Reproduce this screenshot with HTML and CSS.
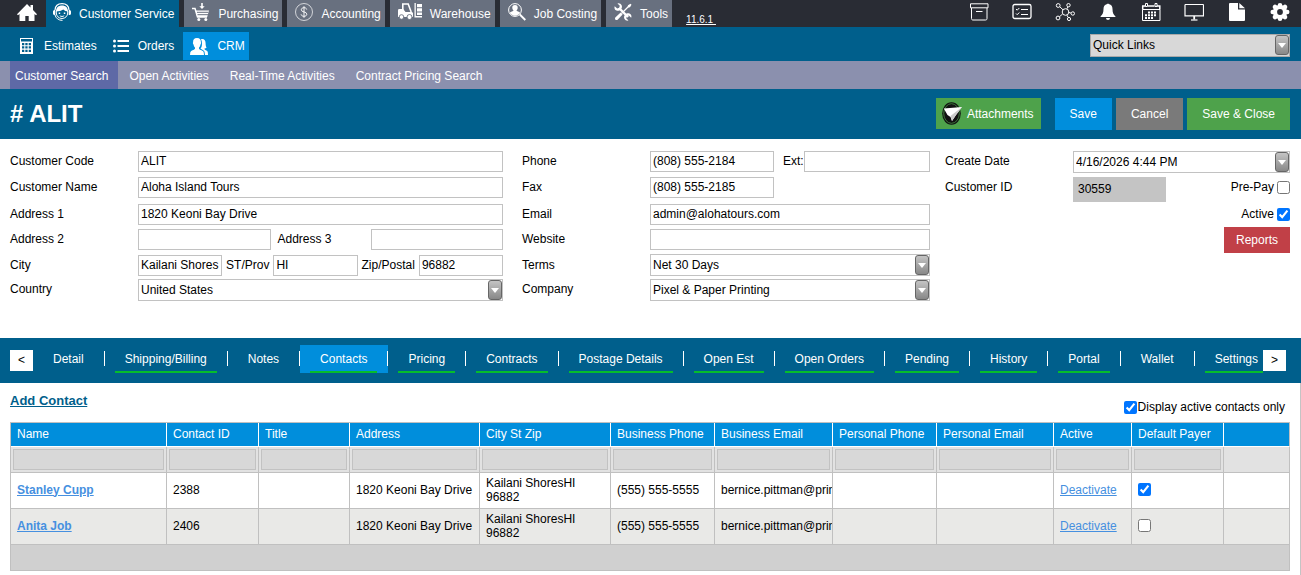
FILE: index.html
```html
<!DOCTYPE html>
<html lang="en">
<head>
  <meta charset="UTF-8" />
  <meta name="viewport" content="width=device-width, initial-scale=1" />
  <title>Customer - ALIT</title>
  <link rel="stylesheet" href="styles.css">
</head>
<body>
  <header class="topbar">
    <nav class="modules" aria-label="Modules">
      <a href="#" class="home" aria-label="Home">
        <svg width="20" height="18" viewBox="0 0 20 18"><path fill="#fff" d="M10 0 13.500 3.500V1H16v5L20 10.200l-1 1-1.500-1.200V17h-5.800v-5H8.300v5H2.500v-7L1 11.200l-1-1z"/></svg>
      </a>
      <a href="#" class="module active">
        <svg width="18" height="18" viewBox="0 0 18 18" fill="none" stroke="#fff"><path stroke-width="1.200" d="M2 7C2.300 3 5 .7 9 .7S15.700 3 16 7"/><path stroke-width="1" d="M3.300 8v2c0 3 2.500 5.500 5.700 5.500s5.700-2.500 5.700-5.500V8"/><path fill="#fff" stroke="none" d="M3 8.500c0-4 2.500-6 6-6s6 2 6 6c-1.800 0-3.500-.7-4.700-2C8.500 7.800 6 8.500 3 8.500zM0 8.500C0 7.500.8 7 2.300 7v5C.8 12 0 11.500 0 10.500zM18 8.500c0-1-.8-1.500-2.300-1.500v5c1.500 0 2.300-.5 2.300-1.500zM5.700 9.500h1.500V11H5.700zM10.800 9.500h1.500V11h-1.500z"/><path d="M6.800 12.700c1 1 3.400 1 4.400 0M2 12c.8 3.200 3.500 5.400 7.500 5.400"/></svg>
        Customer Service
      </a>
      <a href="#" class="module">
        <svg width="18" height="18" viewBox="0 0 18 18" fill="none" stroke="#fff"><path stroke-width="1.500" d="M0 5.500h3L5.500 14H15"/><path fill="#fff" stroke="none" d="M3.500 7.500h13.500l-1.800 6.500H5.200zM10 6 7.300 3.200h1.900V0h1.600v3.200h1.900z"/><path stroke="#68707f" stroke-width="1" d="M5 9.300h11.500M5.500 11.700h10.500"/><circle cx="6.800" cy="16.400" r="1.500" fill="#fff" stroke="none"/><circle cx="13.800" cy="16.400" r="1.500" fill="#fff" stroke="none"/></svg>
        Purchasing
      </a>
      <a href="#" class="module">
        <svg width="18" height="18" viewBox="0 0 18 18" fill="none" stroke="#fff"><circle cx="9" cy="9" r="8.500" stroke-width=".7"/><path stroke-width=".9" d="M11.700 6.500C11.500 5.200 10.500 4.700 9 4.700S6.300 5.400 6.300 6.800c0 3 5.500 1.300 5.500 4.400 0 1.400-1.200 2.100-2.800 2.100s-2.700-.6-2.900-2M9 3.200v11.600"/></svg>
        Accounting
      </a>
      <a href="#" class="module">
        <svg width="24" height="17" viewBox="0 0 24 17" fill="none" stroke="#fff"><path stroke-width="1.600" d="M4.800 8V1h5.400l3 8"/><path fill="#fff" stroke="none" d="M.5 6h4.700l2.300 3h6.500l1 1v4H0V7.500zM16.500 0h1.300v13H24v1.500h-7.500zM19 1h5v3.300h-5zM19 5.200h5v3.300h-5zM19 9.400h5v2.600h-5z"/><circle cx="3.500" cy="14" r="2.300" fill="#fff" stroke="#68707f" stroke-width=".9"/><circle cx="11.500" cy="14" r="2.500" fill="#fff" stroke="#68707f" stroke-width=".9"/></svg>
        Warehouse
      </a>
      <a href="#" class="module">
        <svg width="18" height="18" viewBox="0 0 18 18" fill="none" stroke="#fff"><circle cx="7" cy="7" r="6.400" stroke-width="1"/><path fill="#fff" stroke="none" d="M7 2c2 0 2.900 1.300 2.700 3-.1 1.200-.6 1.900-1.200 2.400 0 .8 3 1 3.700 2.400-1 1.700-3 2.900-5.200 2.900S2.800 11.500 1.800 9.800C2.500 8.400 5.500 8.200 5.500 7.400 4.900 6.900 4.400 6.200 4.300 5 4.100 3.300 5 2 7 2z"/><path stroke-width="1.900" d="m11.800 11.500 5.500 5.500"/></svg>
        Job Costing
      </a>
      <a href="#" class="module">
        <svg width="18" height="18" viewBox="0 0 18 18" fill="none" stroke="#fff"><path stroke-width="2.400" d="M5 5l9 9"/><path fill="#fff" stroke="none" d="M3.500.5 5.800 2.800 5.300 4.800 3.200 5.500.7 3.200C0 5 .8 7 2.500 7.600c1.200.4 2 .2 3 0l2.200-2.300c.3-1 .4-1.800-.1-3C7 .8 5 0 3.500.5zM14.500 17.500l-2.300-2.300.5-2 2-.7 2.500 2.300c.7-1.800 0-3.800-1.700-4.400-1.200-.4-2-.2-3 0l-2.200 2.300c-.3 1-.4 1.800.1 3 .7 1.500 2.600 2.300 4.100 1.800z"/><path stroke-width="1.300" d="M7.500 10.500 14.500 3.500"/><path fill="#fff" stroke="none" d="m14 2.300 2.500-1.500 1 1-1.500 2.500-1.500.3-.8-.8zM6.600 9.400l2 2-5 5.300c-1.600 1-3.300-.6-2.300-2.300z"/></svg>
        Tools
      </a>
      <a href="#" class="version">11.6.1&nbsp;</a>
    </nav>
    <div class="shortcuts">
      <a href="#" aria-label="Archive"><svg width="20" height="18" viewBox="0 0 20 18" fill="none" stroke="#fff"><path d="M1.500.8h17.500v4H1.500z"/><path d="M2.500 5v10.500c0 1 .5 1.500 1.500 1.500h12.500c1 0 1.500-.5 1.500-1.500V5M7 8.500h6.500"/></svg></a>
      <a href="#" aria-label="Tasks"><svg width="20" height="18" viewBox="0 0 20 18" fill="none" stroke="#fff"><rect x="1" y="1.500" width="18" height="14" rx="1.800" stroke-width="1.300"/><path d="m4 6 1.200 1.200L7.300 5M4 10.500l1.200 1.200L7.300 9.500M9 6.500h7M9 11.500h7"/></svg></a>
      <a href="#" aria-label="Network"><svg width="20" height="18" viewBox="0 0 20 18" fill="none" stroke="#fff"><circle cx="10.500" cy="9" r="3.300"/><circle cx="3.200" cy="2.500" r="1.900"/><circle cx="13.500" cy="2.200" r="1.700"/><circle cx="17.800" cy="10.500" r="1.700"/><circle cx="3" cy="15" r="1.900"/><circle cx="14" cy="16" r="1.600"/><path d="m4.800 3.800 3.200 3M13 3.700l-1 2M14 9.500l2 .6M4.500 13.700l3-2.600M12 12.200l1 2"/></svg></a>
      <a href="#" aria-label="Notifications"><svg width="20" height="18" viewBox="0 0 20 18" fill="#fff"><path d="M9.200 1a.9.900 0 0 1 1.600 0c2.700.6 3.700 2.500 3.700 5 0 4 1 5.700 2.900 7.300V14H2.600v-.7C4.500 11.700 5.500 10 5.500 6c0-2.500 1-4.400 3.700-5zM8 15h4a2 2 0 0 1-4 0z"/></svg></a>
      <a href="#" aria-label="Calendar"><svg width="20" height="18" viewBox="0 0 20 18" fill="none" stroke="#fff"><path d="M1.500 6.500h17.500v11H1.500z"/><path stroke-width="1.500" d="M1 3h3.500M7 3h6.500M16 3h3.500M1.700 3v3.500M18.800 3v3.500"/><path d="M4.500.5h2v3h-2zM14 .5h2v3h-2z"/><path stroke-width="2" stroke-dasharray="2 1" d="M7 9.500h9M4 12.300h12M4 15.100h9"/></svg></a>
      <a href="#" aria-label="Screen"><svg width="20" height="18" viewBox="0 0 20 18" fill="none" stroke="#fff"><path d="M1 1.500h18.500"/><path stroke-width="1.200" d="M1 1.500v11.300h18.500V1.500"/><path stroke-width="1.800" d="M10.200 13v3.500"/><path stroke-width="1.200" d="M7 17h6.500"/></svg></a>
      <a href="#" aria-label="Documents"><svg width="20" height="18" viewBox="0 0 20 18" fill="#fff"><path d="M3 0h8v6.500h7V17a1 1 0 0 1-1 1H3a1 1 0 0 1-1-1V1a1 1 0 0 1 1-1zM12.300 0 18 5.300h-5.700z"/></svg></a>
      <a href="#" aria-label="Settings"><svg width="20" height="18" viewBox="0 0 20 18"><g stroke="#fff" stroke-width="4.600" stroke-linecap="round"><path d="M10 2.300v13.400M2.800 9h14.400M5 4l10 10M15 4 5 14"/></g><circle cx="10" cy="9" r="7" fill="#fff"/><circle cx="10" cy="9" r="2.900" fill="#292c34"/></svg></a>
    </div>
  </header>

  <div class="submenu">
    <nav class="submenu-links" aria-label="Customer Service">
      <a href="#" class="sub">
        <svg width="16" height="16" viewBox="0 0 16 16"><path fill="#fff" fill-rule="evenodd" d="M1 0h13v16H1zM2 1v2.500h11V1zM3 5v2.300h2.300V5zM6.300 5v2.300h2.300V5zM9.700 5v2.300H12V5zM3 8.300v2.300h2.300V8.300zM6.300 8.300v2.300h2.300V8.300zM9.700 8.300v2.300H12V8.300zM3 11.700V14h2.300v-2.300zM6.300 11.700V14h2.300v-2.300zM9.700 11.700V14H12v-2.300z"/></svg>
        Estimates
      </a>
      <a href="#" class="sub">
        <svg width="16" height="14" viewBox="0 0 16 14" fill="#fff"><path d="M4.500 1H16v2H4.500zM4.500 6H16v2H4.500zM4.500 11H16v2H4.500z"/><circle cx="1.500" cy="2" r="1.500"/><circle cx="1.500" cy="7" r="1.500"/><circle cx="1.500" cy="12" r="1.500"/></svg>
        Orders
      </a>
      <a href="#" class="sub active">
        <svg width="18" height="17" viewBox="0 0 18 17" fill="#fff"><path d="M7 0c3 0 4 1.800 3.900 4.300.4.300.2 1.600-.3 2C10.200 8 9.800 8.800 9 9.500v1.200c1 1.500 4.200 1.500 4.700 3.500l.3 2.800H0l.3-2.800c.7-2 3.700-2 4.700-3.500V9.500C4.200 8.800 3.800 8 3.400 6.300c-.5-.4-.7-1.700-.3-2C3 1.800 4 0 7 0z"/><path d="M11 1.300c3-.8 4.600 1 4.600 4 0 2 .3 3.200 1 4.200-.5.700-1.300 1-2.100 1v.8c.7 1 3 1.200 3.300 2.900l.2 2.800h-3l-.5-3.200c-.5-1.700-2.700-2.300-4-3.100.9-1 1.500-2.700 1.500-5.200 0-1.500-.3-3-1-4.200z"/></svg>
        CRM
      </a>
    </nav>
    <div class="select quick">
      <select aria-label="Quick Links"><option>Quick Links</option></select>
    </div>
  </div>

  <nav class="pages" aria-label="CRM">
    <a href="#" class="active">Customer Search</a>
    <a href="#">Open Activities</a>
    <a href="#">Real-Time Activities</a>
    <a href="#">Contract Pricing Search</a>
  </nav>

  <div class="titlebar">
    <h1># ALIT</h1>
    <div class="actions">
      <button type="button" class="btn green attach">
        <svg width="20" height="23" viewBox="0 0 20 23"><ellipse cx="9.500" cy="11.500" rx="9.300" ry="11.300" fill="#111"/><ellipse cx="9.500" cy="11.500" rx="7.800" ry="9.800" fill="none" stroke="#4ea24b" stroke-width=".7"/><path fill="#fff" d="M1.800 6.500 20 5l-6 8-4 6-1.500-4-3-2z"/><path fill="#ccc" d="M8.500 14 20 5l-6 8-4 6z"/></svg>
        Attachments
      </button>
      <button type="button" class="btn blue">Save</button>
      <button type="button" class="btn gray">Cancel</button>
      <button type="button" class="btn green">Save &amp; Close</button>
    </div>
  </div>

  <main>
    <form class="details">
      <div class="col col-main">
        <label for="code">Customer Code</label>
        <div class="field"><input type="text" id="code" value="ALIT"></div>
        <label for="name">Customer Name</label>
        <div class="field"><input type="text" id="name" value="Aloha Island Tours"></div>
        <label for="addr1">Address 1</label>
        <div class="field"><input type="text" id="addr1" value="1820 Keoni Bay Drive"></div>
        <label for="addr2">Address 2</label>
        <div class="field">
          <input type="text" id="addr2">
          <label for="addr3" class="addr3">Address 3</label>
          <input type="text" id="addr3">
        </div>
        <label for="city">City</label>
        <div class="field place">
          <input type="text" id="city" value="Kailani Shores">
          <label for="state">ST/Prov</label>
          <input type="text" id="state" value="HI">
          <label for="zip">Zip/Postal</label>
          <input type="text" id="zip" value="96882">
        </div>
        <label for="country">Country</label>
        <div class="select"><select id="country"><option>United States</option></select></div>
      </div>

      <div class="col col-contact">
        <label for="phone">Phone</label>
        <div class="field">
          <input type="text" id="phone" class="phone" value="(808) 555-2184">
          <label for="ext" class="ext">Ext:</label>
          <input type="text" id="ext">
        </div>
        <label for="fax">Fax</label>
        <div class="field"><input type="text" id="fax" class="phone" value="(808) 555-2185"></div>
        <label for="email">Email</label>
        <div class="field"><input type="text" id="email" value="admin@alohatours.com"></div>
        <label for="website">Website</label>
        <div class="field"><input type="text" id="website"></div>
        <label for="terms">Terms</label>
        <div class="select"><select id="terms"><option>Net 30 Days</option></select></div>
        <label for="company">Company</label>
        <div class="select"><select id="company"><option>Pixel &amp; Paper Printing</option></select></div>
      </div>

      <div class="col col-status">
        <label for="created">Create Date</label>
        <div class="select"><select id="created"><option>4/16/2026 4:44 PM</option></select></div>
        <label for="custid">Customer ID</label>
        <div class="field">
          <input type="text" id="custid" class="readonly" value="30559" readonly>
          <label class="check">Pre-Pay <input type="checkbox"></label>
        </div>
        <div class="field wide"><label class="check">Active <input type="checkbox" checked></label></div>
        <div class="field wide"><button type="button" class="btn red">Reports</button></div>
      </div>
    </form>

    <nav class="tabbar" aria-label="Customer sections">
      <button type="button" class="scroll" aria-label="Previous tabs">&lt;</button>
      <ul class="tabs">
        <li><a href="#">Detail</a></li>
        <li><a href="#" class="has-data">Shipping/Billing</a></li>
        <li><a href="#">Notes</a></li>
        <li class="active"><a href="#" class="has-data">Contacts</a></li>
        <li><a href="#" class="has-data">Pricing</a></li>
        <li><a href="#" class="has-data">Contracts</a></li>
        <li><a href="#" class="has-data">Postage Details</a></li>
        <li><a href="#" class="has-data">Open Est</a></li>
        <li><a href="#" class="has-data">Open Orders</a></li>
        <li><a href="#" class="has-data">Pending</a></li>
        <li><a href="#" class="has-data">History</a></li>
        <li><a href="#" class="has-data">Portal</a></li>
        <li><a href="#">Wallet</a></li>
        <li><a href="#" class="has-data">Settings</a></li>
      </ul>
      <button type="button" class="scroll" aria-label="Next tabs">&gt;</button>
    </nav>

    <section class="contacts">
      <div class="contacts-head">
        <a href="#" class="add">Add Contact</a>
        <label class="only-active"><input type="checkbox" checked>Display active contacts only</label>
      </div>
      <table class="grid">
        <colgroup>
          <col class="w-name"><col class="w-id"><col class="w-title"><col class="w-address">
          <col class="w-city"><col class="w-phone"><col class="w-email"><col class="w-phone">
          <col class="w-pemail"><col class="w-active"><col class="w-payer"><col>
        </colgroup>
        <thead>
          <tr>
            <th>Name</th><th>Contact ID</th><th>Title</th><th>Address</th>
            <th>City St Zip</th><th>Business Phone</th><th>Business Email</th><th>Personal Phone</th>
            <th>Personal Email</th><th>Active</th><th>Default Payer</th><th></th>
          </tr>
          <tr class="filters">
            <td><input type="text" aria-label="Filter name"></td>
            <td><input type="text" aria-label="Filter contact ID"></td>
            <td><input type="text" aria-label="Filter title"></td>
            <td><input type="text" aria-label="Filter address"></td>
            <td><input type="text" aria-label="Filter city"></td>
            <td><input type="text" aria-label="Filter business phone"></td>
            <td><input type="text" aria-label="Filter business email"></td>
            <td><input type="text" aria-label="Filter personal phone"></td>
            <td><input type="text" aria-label="Filter personal email"></td>
            <td><input type="text" aria-label="Filter active"></td>
            <td><input type="text" aria-label="Filter default payer"></td>
            <td></td>
          </tr>
        </thead>
        <tbody>
          <tr>
            <td><a href="#" class="contact">Stanley Cupp</a></td>
            <td>2388</td>
            <td></td>
            <td>1820 Keoni Bay Drive</td>
            <td>Kailani ShoresHI<br>96882</td>
            <td>(555) 555-5555</td>
            <td>bernice.pittman@printing.com</td>
            <td></td>
            <td></td>
            <td><a href="#">Deactivate</a></td>
            <td><input type="checkbox" aria-label="Default payer" checked></td>
            <td></td>
          </tr>
          <tr>
            <td><a href="#" class="contact">Anita Job</a></td>
            <td>2406</td>
            <td></td>
            <td>1820 Keoni Bay Drive</td>
            <td>Kailani ShoresHI<br>96882</td>
            <td>(555) 555-5555</td>
            <td>bernice.pittman@printing.com</td>
            <td></td>
            <td></td>
            <td><a href="#">Deactivate</a></td>
            <td><input type="checkbox" aria-label="Default payer"></td>
            <td></td>
          </tr>
        </tbody>
        <tfoot>
          <tr><td colspan="12"></td></tr>
        </tfoot>
      </table>
    </section>
  </main>
</body>
</html>
```
FILE: styles.css
```css
*, *::before, *::after {
  margin: 0; padding: 0; box-sizing: border-box;
}
html {
  height: 100%;
}
body {
  min-height: 100%;
  display: flex;
  flex-direction: column;
  font-family: "Liberation Sans", Arial, sans-serif;
  font-size: 12px;
  line-height: 14px;
  color: #000;
  background: #fff;
}
input, select, button {
  font: inherit;
  color: inherit;
}
a {
  color: inherit;
  text-decoration: none;
}
svg {
  display: block;
  flex: none;
}

/* top module bar */
.topbar {
  display: flex;
  justify-content: space-between;
  height: 27px;
  padding-right: 11px;
  background: #292c34;
  color: #fff;
}
.modules, .shortcuts {
  display: flex;
}
.modules {
  gap: 5px;
}
.home {
  display: flex;
  justify-content: center;
  width: 46px;
  padding: 4px 0 0 8px;
  margin-right: -5px;
}
.module {
  display: flex;
  align-items: flex-start;
  gap: 8px;
  padding: 3px 4px 0 8px;
  background: #68707f;
  line-height: 22px;
  white-space: nowrap;
}
.module.active {
  padding: 3px 5px 0 7px;
  background: #005f8c;
}
.version {
  align-self: flex-end;
  margin-left: 9px;
  font-size: 10px;
  line-height: 14px;
  text-decoration: underline;
}
.shortcuts {
  gap: 23px;
  padding-top: 3px;
}

/* second level */
.submenu {
  display: flex;
  justify-content: space-between;
  align-items: center;
  height: 34px;
  padding: 0 11px;
  background: #005f8c;
  color: #fff;
}
.submenu-links {
  display: flex;
  padding-top: 4px;
}
.sub {
  display: flex;
  align-items: center;
  gap: 9px;
  height: 28px;
  padding: 0 8px;
  line-height: 30px;
}
.sub.active {
  padding: 0 4px 0 7px;
  margin-left: 1px;
  background: #008edc;
}
.quick {
  width: 200px;
  color: #000;
}

.pages {
  display: flex;
  height: 28px;
  padding-left: 10px;
  background: #8b90ae;
  color: #fff;
  line-height: 30px;
}
.pages a {
  padding: 0 10px 0 11px;
}
.pages .active {
  padding-left: 5px;
  background: #5e69a6;
}

.titlebar {
  display: flex;
  justify-content: space-between;
  align-items: center;
  height: 50px;
  padding: 0 11px 0 10px;
  background: #005f8c;
  color: #fff;
}
.titlebar h1 {
  font-size: 24px;
  line-height: 28px;
}
.actions {
  display: flex;
  gap: 4px;
}
.btn {
  height: 32px;
  padding: 0 15px;
  border: none;
  color: #fff;
  white-space: nowrap;
  cursor: pointer;
}
.btn.green { background: #4ea24b; }
.btn.blue { background: #008edc; }
.btn.gray { background: #7a7a7a; }
.btn.red {
  height: 26px;
  padding: 0 12px;
  background: #c14047;
}
.btn.attach {
  display: flex;
  align-items: center;
  gap: 5px;
  height: 31px;
  padding: 0 7px 0 6px;
  margin-right: 10px;
}

/* shared fields */
input[type="text"] {
  height: 21px;
  min-width: 0;
  flex: 1 1 0;
  padding: 0 2px 1px;
  border: 1px solid #c2c2c2;
  border-radius: 0;
  background: #fff;
}
input[type="checkbox"] {
  width: 13px;
  height: 13px;
  flex: none;
}
.select {
  position: relative;
}
.select select {
  display: block;
  width: 100%;
  height: 22px;
  padding: 0 18px 1px 2px;
  appearance: none;
  border: 1px solid #c2c2c2;
  border-radius: 0;
  background: #fff;
}
.select.quick select {
  height: 23px;
  background: #d8d8d8;
  border-color: #a9a9a9;
}
.submenu .quick {
  padding-top: 3px;
}
.submenu .quick::before {
  top: 4px;
}
.submenu .quick::after {
  top: 12px;
}
.select::before {
  content: "";
  position: absolute;
  top: 1px; right: 1px;
  width: 14px; height: 20px;
  border: 1px solid #666;
  border-radius: 3px;
  background: linear-gradient(#c4c4c4, #888);
  pointer-events: none;
}
.select::after {
  content: "";
  position: absolute;
  top: 9px; right: 4px;
  border: 4px solid transparent;
  border-top: 5px solid #fff;
  border-bottom: none;
  pointer-events: none;
}

/* customer details */
.details {
  display: flex;
  padding: 12px 11px 37px 10px;
}
.col {
  display: grid;
  grid-template-columns: 128px 1fr;
  grid-template-rows: 22px 23px 21px 22px 20px 22px;
  row-gap: 4px;
  align-items: center;
  min-width: 0;
}
.col-main { flex: 493 1 0; }
.col-contact { flex: 408 1 0; margin-left: 19px; }
.col-status { flex: 345 1 0; margin-left: 15px; }
.details label {
  line-height: 20px;
  align-self: start;
}
.field {
  display: flex;
  align-items: center;
  align-self: start;
  min-width: 0;
}
.addr3 {
  width: 100px;
  padding-left: 7px;
}
.place label {
  padding: 0 4px;
}
.field .phone {
  flex: 0 0 124px;
}
.ext {
  padding-left: 9px;
}
.field .readonly {
  flex: 0 0 93px;
  height: 25px;
  padding: 0 5px 1px;
  border: none;
  background: #c4c4c4;
}
.check {
  display: flex;
  align-items: center;
  gap: 3px;
  margin-left: auto;
}
.wide {
  grid-column: 1 / -1;
}
.wide .btn {
  margin: -2px 0 0 auto;
}

/* section tabs */
.tabbar {
  display: flex;
  align-items: flex-start;
  height: 45px;
  padding: 7px 15px 0 10px;
  background: #005f8c;
  color: #fff;
}
.scroll {
  flex: none;
  width: 23px;
  height: 21px;
  margin-top: 5px;
  padding-bottom: 2px;
  border: none;
  background: #fff;
  color: #000;
}
.tabs {
  display: flex;
  flex: 1;
  min-width: 0;
  overflow: hidden;
  list-style: none;
}
.tabs li {
  flex: none;
  height: 28px;
  padding: 0 11px 0 10px;
  background: linear-gradient(#fff, #fff) no-repeat right 6px / 1px 15px;
}
.tabs li:last-child {
  background: none;
}
.tabs .active {
  background-color: #008edc;
}
.tabs a {
  display: block;
  height: 28px;
  padding: 0 10px;
  line-height: 28px;
  white-space: nowrap;
}
.tabs .has-data {
  border-bottom: 2px solid #06bd2b;
}

/* contacts grid */
main {
  flex: 1;
  display: flex;
  flex-direction: column;
}
.contacts {
  flex: 1;
  padding: 11px 10px 4px;
  border-right: 1px solid #c4c4c4;
}
.contacts-head {
  display: flex;
  justify-content: space-between;
  align-items: flex-start;
  height: 28px;
  padding-right: 5px;
}
.add {
  color: #005f8c;
  font-size: 13px;
  font-weight: bold;
  text-decoration: underline;
}
.only-active {
  display: flex;
  align-items: center;
  gap: 1px;
  padding-top: 6px;
}
.grid {
  width: 100%;
  table-layout: fixed;
  border-collapse: separate;
  border-spacing: 0;
  border: 1px solid #c0c0c0;
  border-width: 1px 0 0 1px;
}
.w-name { width: 156px; }
.w-id { width: 92px; }
.w-title { width: 91px; }
.w-address { width: 130px; }
.w-city { width: 131px; }
.w-phone { width: 104px; }
.w-email { width: 118px; }
.w-pemail { width: 117px; }
.w-active { width: 78px; }
.w-payer { width: 92px; }

.grid th, .grid td {
  padding: 0 6px 2px;
  border: 1px solid #c0c0c0;
  border-width: 0 1px 1px 0;
  text-align: left;
  vertical-align: middle;
  font-weight: normal;
  white-space: nowrap;
  overflow: hidden;
}
.grid th {
  height: 24px;
  background: #008edc;
  color: #fff;
  border-color: #fff;
}
.grid th:last-child {
  border-right-color: #c0c0c0;
}
.grid .filters td {
  height: 26px;
  padding: 0 2px;
  background: #e2e2e2;
}
.grid .filters input {
  display: block;
  width: 100%;
  background: #d8d8d8;
}
.grid tbody td {
  height: 36px;
}
.grid tbody tr:nth-child(even) td {
  background: #e9e9e7;
}
.grid tbody a {
  color: #4690e0;
  text-decoration: underline;
}
.grid .contact {
  font-weight: bold;
}
.grid tbody input {
  display: block;
}
.grid tfoot td {
  height: 26px;
  background: #d0d0d0;
}
```
